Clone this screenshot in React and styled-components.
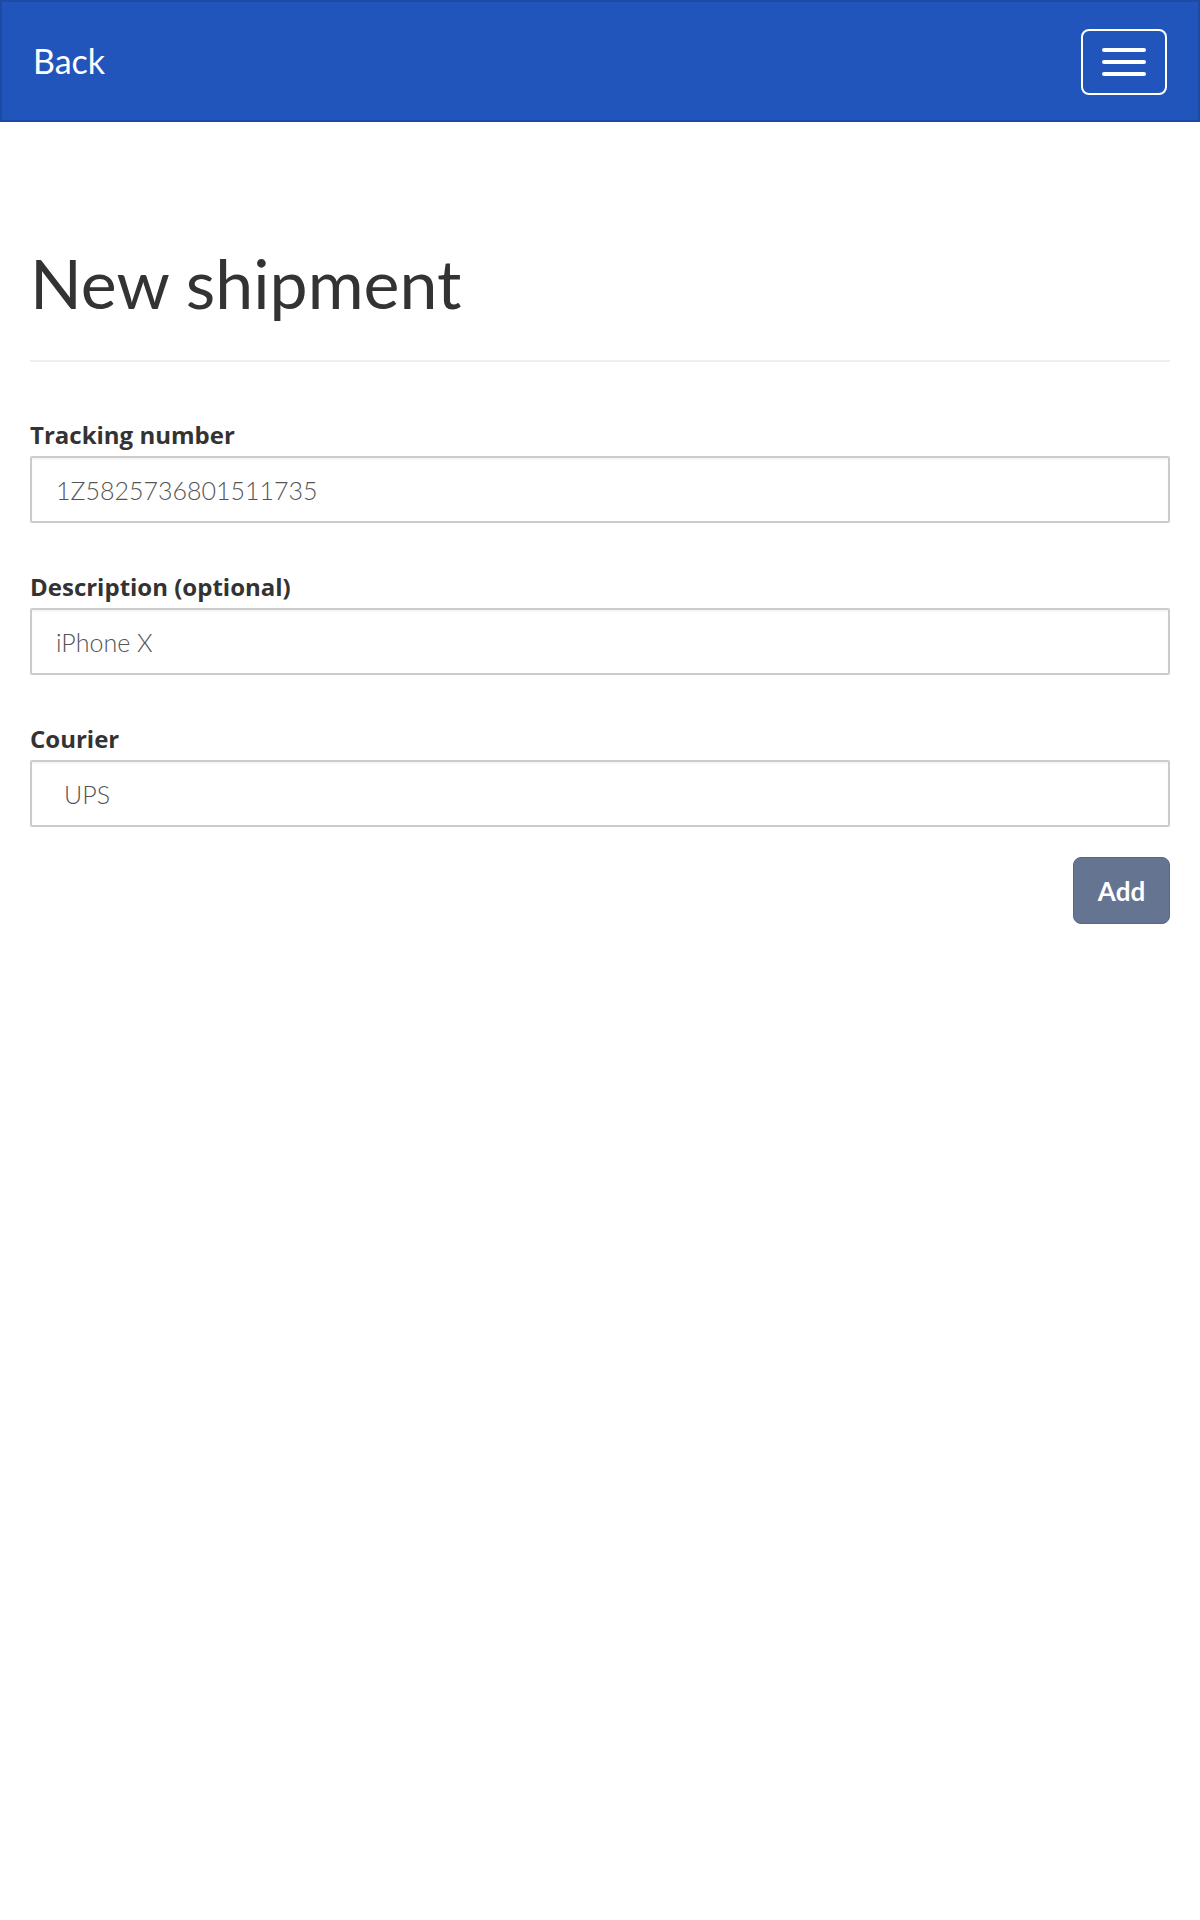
import React from 'react';
import styled, { createGlobalStyle } from 'styled-components';

const Global = createGlobalStyle`
  html, body { margin: 0; padding: 0; background: #fff; }
  body { font-family: Lato, "Open Sans", sans-serif; color: #333; }
  * { box-sizing: border-box; }
`;

const Navbar = styled.nav`
  height: 122px;
  background: #2155bb;
  border: 2px solid #1d4aa5;
  display: flex;
  align-items: center;
  justify-content: space-between;
  padding: 0 31px 0 31px;
`;

const BackLink = styled.a`
  color: #fff;
  font-size: 34px;
  font-weight: 400;
  text-decoration: none;
  line-height: 1;
`;

const MenuButton = styled.button`
  width: 86px;
  height: 66px;
  border: 2px solid #fff;
  border-radius: 8px;
  background: transparent;
  display: flex;
  flex-direction: column;
  align-items: center;
  justify-content: center;
  gap: 8px;
  padding: 0;
  margin-top: 2px;
`;

const MenuBar = styled.span`
  display: block;
  width: 44px;
  height: 4px;
  border-radius: 2px;
  background: #fff;
`;

const Container = styled.main`
  padding: 0 30px;
`;

const Title = styled.h1`
  margin: 0;
  padding-top: 127px;
  font-size: 68px;
  font-weight: 400;
  line-height: 1;
  color: #333;
`;

const Divider = styled.hr`
  margin: 43px 0 0;
  border: 0;
  border-top: 2px solid #eee;
`;

const Form = styled.form`
  display: flex;
  flex-direction: column;
  padding-top: 58px;
`;

const Group = styled.div`
  display: flex;
  flex-direction: column;
  margin-bottom: ${p => (p.$last ? '30px' : '49px')};
`;

const Label = styled.label`
  font-family: "Open Sans", Lato, sans-serif;
  font-size: 24px;
  font-weight: 700;
  color: #333;
  line-height: 30px;
  height: 30px;
  margin-bottom: 6px;
  white-space: nowrap;
`;

const fieldCss = `
  height: 67px;
  width: 100%;
  border: 2px solid #cbcbcb;
  border-radius: 2px;
  box-shadow: inset 0 2px 2px rgba(0,0,0,0.04);
  background: #fff;
  font-family: Lato, "Open Sans", sans-serif;
  font-size: 25px;
  font-weight: 300;
  color: #555;
  outline: none;
`;

const Input = styled.input`
  ${fieldCss}
  padding: 0 24px;
`;

const Select = styled.select`
  ${fieldCss}
  padding: 0 32px;
  appearance: none;
  -webkit-appearance: none;
`;

const Actions = styled.div`
  display: flex;
  justify-content: flex-end;
`;

const AddButton = styled.button`
  width: 97px;
  height: 67px;
  border-radius: 8px;
  border: 1px solid #56678a;
  background: #647491;
  color: #fff;
  font-family: Lato, "Open Sans", sans-serif;
  font-size: 26px;
  font-weight: 700;
  padding: 0;
`;

export default function App() {
  return (
    <>
      <Global />
      <Navbar>
        <BackLink href="#">Back</BackLink>
        <MenuButton type="button" aria-label="Menu">
          <MenuBar />
          <MenuBar />
          <MenuBar />
        </MenuButton>
      </Navbar>
      <Container>
        <Title>New shipment</Title>
        <Divider />
        <Form onSubmit={e => e.preventDefault()}>
          <Group>
            <Label htmlFor="tracking">Tracking number</Label>
            <Input id="tracking" defaultValue="1Z5825736801511735" />
          </Group>
          <Group>
            <Label htmlFor="desc">Description (optional)</Label>
            <Input id="desc" defaultValue="iPhone X" />
          </Group>
          <Group $last>
            <Label htmlFor="courier">Courier</Label>
            <Select id="courier" defaultValue="UPS">
              <option value="UPS">UPS</option>
              <option value="FedEx">FedEx</option>
              <option value="DHL">DHL</option>
              <option value="USPS">USPS</option>
            </Select>
          </Group>
          <Actions>
            <AddButton type="submit">Add</AddButton>
          </Actions>
        </Form>
      </Container>
    </>
  );
}
